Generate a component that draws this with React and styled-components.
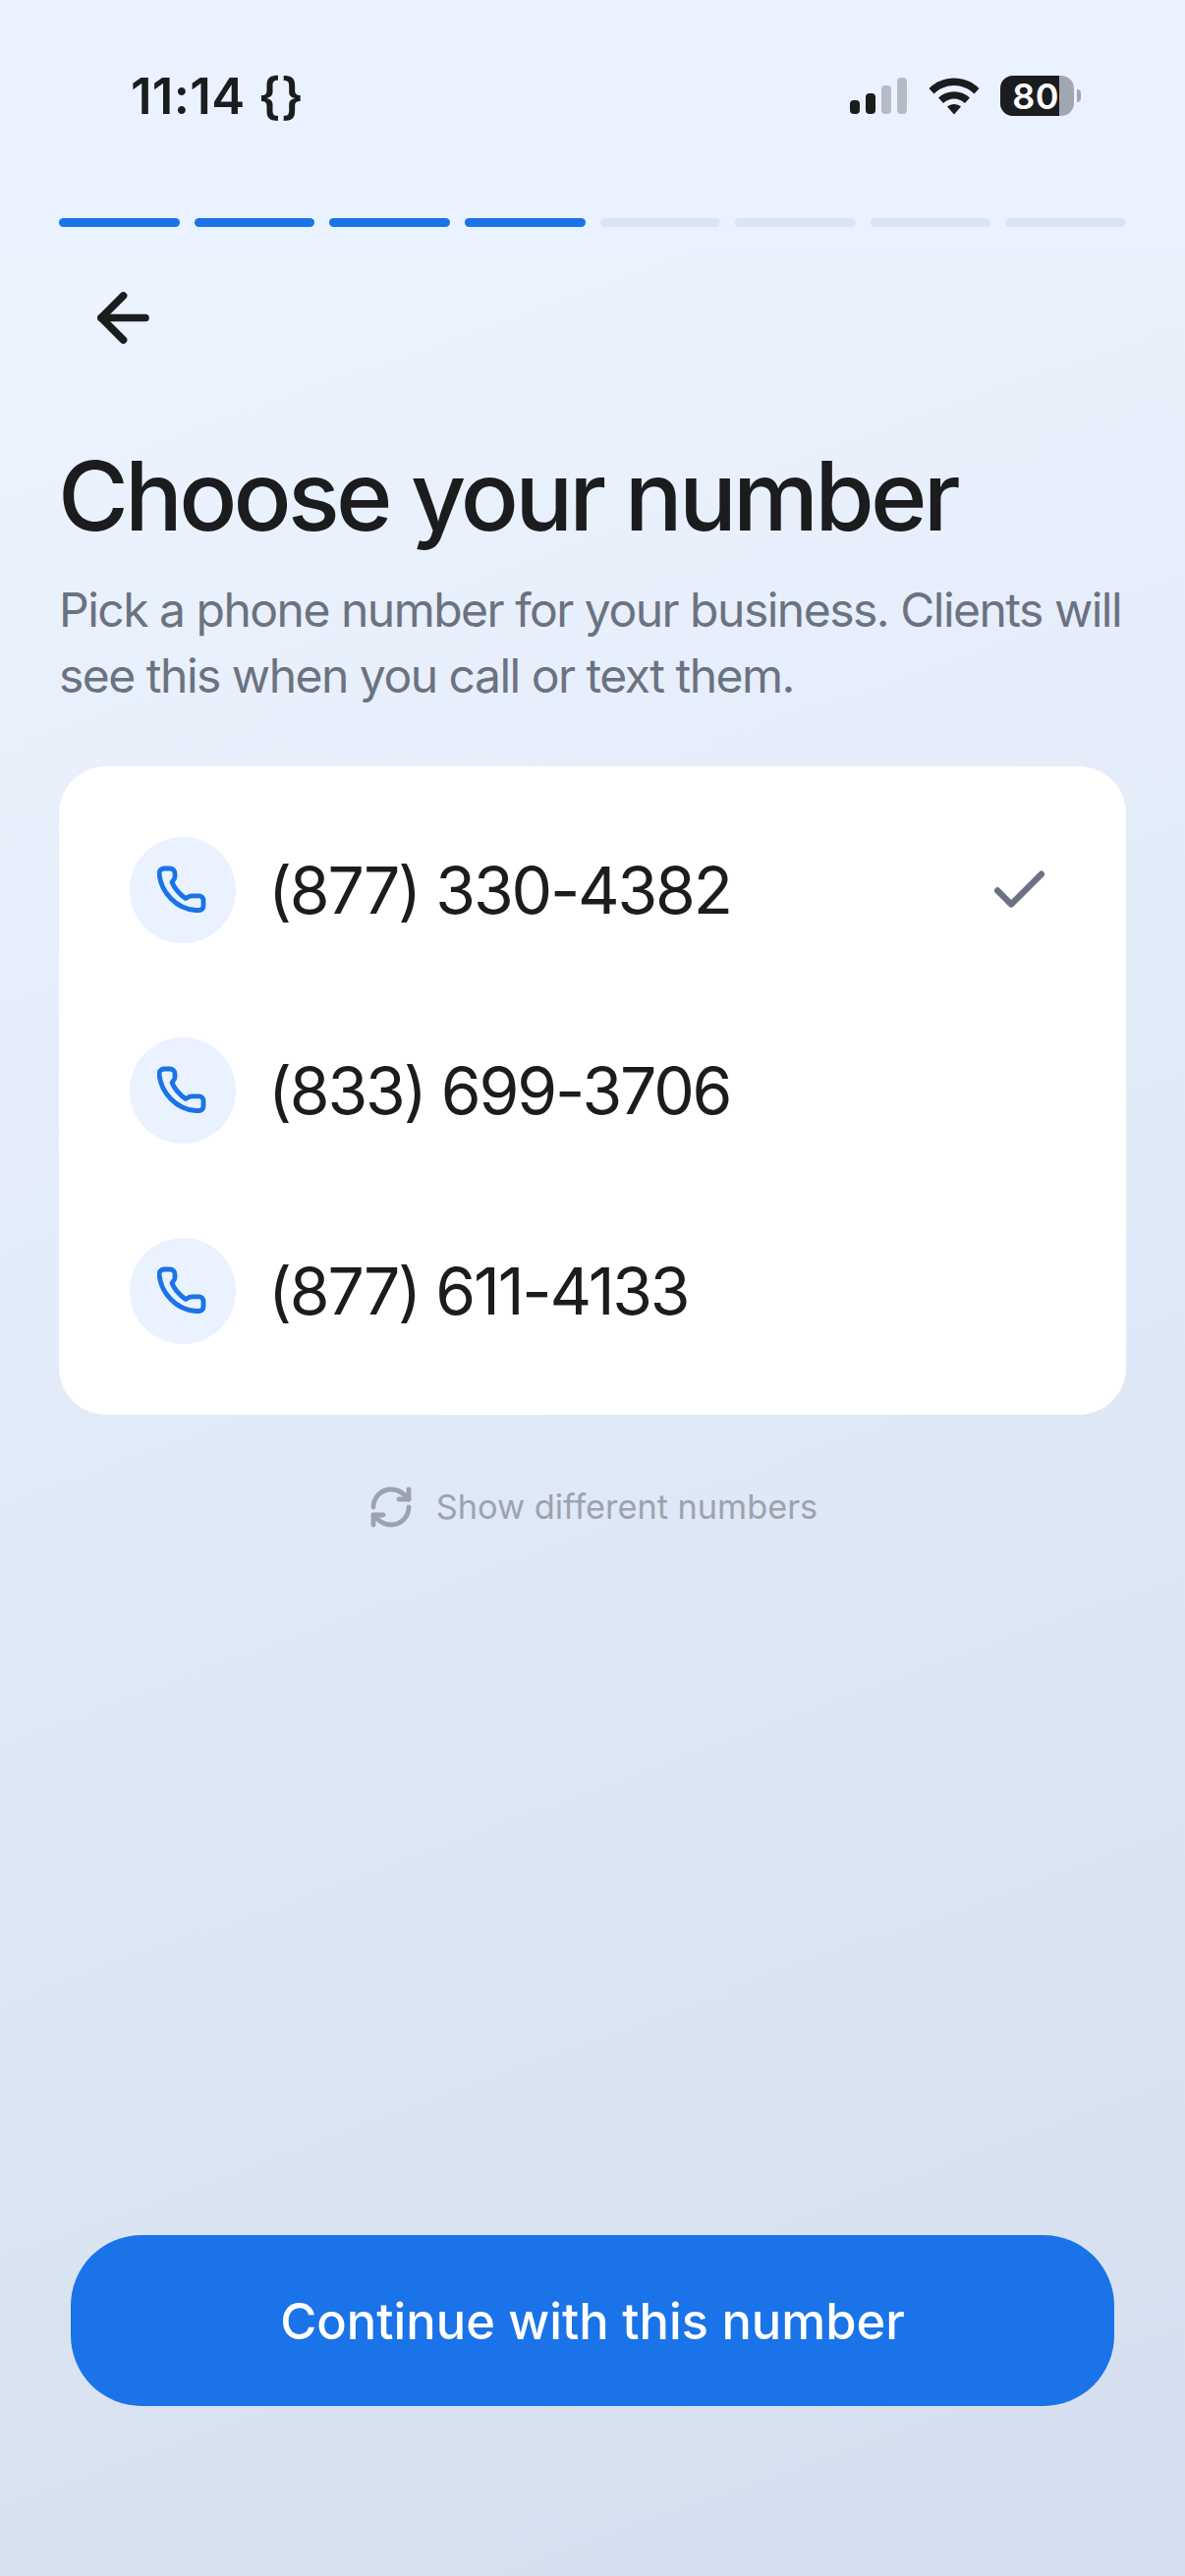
import React from "react";
import styled, { createGlobalStyle } from "styled-components";
import { ArrowLeft, Check, RefreshCw } from "lucide-react";

const Global = createGlobalStyle`
  html, body { margin: 0; padding: 0; background: #e9f2fe; }
  * { box-sizing: border-box; }
`;
const Screen = styled.div`
  width: 1206px; height: 2622px; display: flex; flex-direction: column;
  font-family: Inter, "Noto Sans", sans-serif; color: #1a1c1e; overflow: hidden;
`;
const Header = styled.header`
  height: 255px; flex: none; background: #e9f2fe; padding: 76px 60px 0;
  display: flex; flex-direction: column;
`;
const StatusBar = styled.div`
  height: 43px; display: flex; align-items: center; justify-content: space-between;
  padding: 0 46px 0 73px;
`;
const Time = styled.span`
  font-size: 51px; font-weight: 600; line-height: 40px; letter-spacing: 0.3px;
`;
const StatusIcons = styled.div` display: flex; align-items: center; gap: 22px; `;
const Battery = styled.div`
  width: 75px; height: 41px; border-radius: 13px; overflow: hidden; display: flex;
  background: #a0a7b3;
`;
const BatteryFill = styled.div`
  width: 60px; background: #1a1c1e; color: #fff; font-size: 36px; font-weight: 600;
  display: flex; align-items: center; justify-content: flex-end; padding-right: 0; letter-spacing: 0.5px;
`;
const BatteryWrap = styled.div` display: flex; align-items: center; gap: 3px; margin-left: -1px; `;
const BatteryNub = styled.div`
  width: 4px; height: 13px; background: #a0a7b3; border-radius: 0 6px 6px 0;
`;
const Progress = styled.div`
  margin-top: 103px; display: grid; grid-template-columns: repeat(8, 1fr); gap: 15px;
`;
const Segment = styled.div`
  height: 9px; border-radius: 5px; background: ${p => (p.$on ? "#1a73e8" : "#dae4f2")};
`;
const Body = styled.main`
  flex: 1; display: flex; flex-direction: column; padding: 0 60px 173px;
  background: linear-gradient(160deg, #ecf4ff 0%, #d4deee 100%);
`;
const BackButton = styled.button`
  all: unset; width: 77px; height: 77px; margin: 30px 0 0 27px; display: flex; color: #1a1c1e;
`;
const Title = styled.h1`
  margin: 85px 0 0 -1px; font-size: 98px; font-weight: 500; line-height: 116px; letter-spacing: -3.8px; color: #1a1c1e;
`;
const Subtitle = styled.p`
  margin: 24px 0 0; font-size: 48px; font-weight: 400; line-height: 67px; color: #6b7280; white-space: nowrap;
  letter-spacing: -1.5px;
`;
const Card = styled.section`
  margin-top: 59px; background: #fff; border-radius: 48px; padding: 24px 0;
`;
const Row = styled.div`
  height: 204px; display: flex; align-items: center; padding: 0 72px; gap: 33px;
`;
const IconCircle = styled.div`
  width: 108px; height: 108px; flex: none; border-radius: 50%; background: #e9f2fe;
  display: flex; align-items: center; justify-content: center;
`;
const Number = styled.span`
  font-size: 66px; font-weight: 400; letter-spacing: -2.2px; color: #1a1c1e;
`;
const Tick = styled.span` margin-left: auto; margin-right: 3px; display: flex; color: #6b7280; `;
const Different = styled.button`
  all: unset; margin-top: 70px; align-self: center; display: flex; align-items: center; gap: 22px;
  font-size: 34.3px; color: #9ca3af; font-family: Inter, sans-serif; line-height: 44px;
`;
const Continue = styled.button`
  all: unset; margin: auto 12px 0; height: 174px; border-radius: 72px; background: #1a73e8; color: #fff;
  display: flex; align-items: center; justify-content: center;
  font-family: Inter, sans-serif; font-size: 50.6px; font-weight: 500;
`;

const PhoneIcon = () => (
  <svg width="52" height="52" viewBox="1.5 1 52 52" fill="none" stroke="#1a73e8" strokeWidth="4.8" strokeLinejoin="round" strokeLinecap="round">
    <path d="M8 5H14.5A5 5 0 0 1 19.5 10V13.5C19.5 15.5 18 17 16.5 19C19 25 24 31 30.5 35.5L34 33.5C35 33 36 32.8 37 32.8H44A4.5 4.5 0 0 1 48.5 37.3V43A4.5 4.5 0 0 1 44 47.5H41C21 46.5 5 29 3.5 10A5 5 0 0 1 8 5Z" />
  </svg>
);
const Signal = () => (
  <svg width="58" height="38" viewBox="0 0 58 38">
    <rect x="0" y="23" width="10" height="14" rx="4" fill="#1a1c1e" />
    <rect x="16" y="16" width="10" height="21" rx="4" fill="#1a1c1e" />
    <rect x="32" y="8" width="10" height="29" rx="4" fill="#b4bbc6" />
    <rect x="48" y="0" width="10" height="37" rx="4" fill="#b4bbc6" />
  </svg>
);
const Wifi = () => (
  <svg width="52" height="38" viewBox="0 0 52 38" fill="#1a1c1e">
    <path d="M0.5 11 C14 -3 38 -3 51.5 11 L46.5 16.5 C35 5 17 5 5.5 16.5Z" />
    <path d="M10 20.5 C19 12 33 12 42 20.5 L37 26 C30.5 20 21.5 20 15 26Z" />
    <path d="M19 29.5 C23 26 29 26 33 29.5 L26 37.5Z" />
  </svg>
);

const numbers = ["(877) 330-4382", "(833) 699-3706", "(877) 611-4133"];

export default function App() {
  return (
    <Screen>
      <Global />
      <Header>
        <StatusBar>
          <Time>11:14 {"{}"}</Time>
          <StatusIcons>
            <Signal />
            <Wifi />
            <BatteryWrap>
              <Battery><BatteryFill>80</BatteryFill></Battery>
              <BatteryNub />
            </BatteryWrap>
          </StatusIcons>
        </StatusBar>
        <Progress>
          {[0, 1, 2, 3, 4, 5, 6, 7].map(i => <Segment key={i} $on={i < 4} />)}
        </Progress>
      </Header>
      <Body>
        <BackButton><ArrowLeft size={77} strokeWidth={2.4} /></BackButton>
        <Title>Choose your number</Title>
        <Subtitle>Pick a phone number for your business. Clients will<br />see this when you call or text them.</Subtitle>
        <Card>
          {numbers.map((n, i) => (
            <Row key={n}>
              <IconCircle><PhoneIcon /></IconCircle>
              <Number>{n}</Number>
              {i === 0 && <Tick><Check size={67} strokeWidth={2.3} /></Tick>}
            </Row>
          ))}
        </Card>
        <Different><RefreshCw size={48} strokeWidth={2.4} />Show different numbers</Different>
        <Continue>Continue with this number</Continue>
      </Body>
    </Screen>
  );
}
